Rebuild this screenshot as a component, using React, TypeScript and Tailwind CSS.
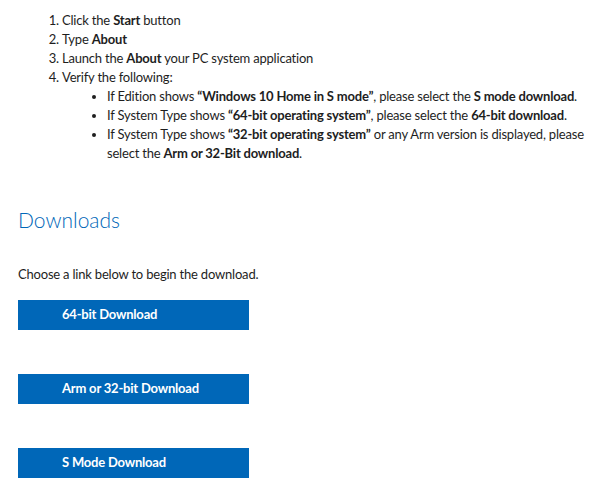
export default function App() {
  const buttons = ['64-bit Download', 'Arm or 32-bit Download', 'S Mode Download'];
  return (
    <div className="w-[600px] h-[483px] bg-white text-[#1e1e1e] overflow-hidden tracking-[-0.2px]" style={{ fontFamily: 'Lato, "Open Sans", sans-serif' }}>
      <ol className="list-decimal pl-[62px] pr-[6px] pt-[11px] text-[13px] leading-[19px]">
        <li>Click the <b>Start</b> button</li>
        <li>Type <b>About</b></li>
        <li>Launch the <b>About</b> your PC system application</li>
        <li>
          Verify the following:
          <ul className="list-disc pl-[45px]">
            <li>If Edition shows <b>“Windows 10 Home in S mode”</b>, please select the <b>S mode download</b>.</li>
            <li>If System Type shows <b>“64-bit operating system”</b>, please select the <b>64-bit download</b>.</li>
            <li>If System Type shows <b>“32-bit operating system”</b> or any Arm version is displayed, please select the <b>Arm or 32-Bit download</b>.</li>
          </ul>
        </li>
      </ol>
      <div className="px-[18px]">
        <h2 className="mt-[43px] text-[21px] font-light leading-[28px] text-[#0067b8] tracking-normal">Downloads</h2>
        <p className="mt-[31px] text-[13px] leading-[19px]">Choose a link below to begin the download.</p>
        <div className="mt-[16px] flex flex-col gap-[44px]">
          {buttons.map((b) => (
            <div key={b} className="w-[231px] h-[30px] bg-[#0067b8] text-white font-bold text-[13px] flex items-center pl-[44px]">
              {b}
            </div>
          ))}
        </div>
      </div>
    </div>
  );
}
